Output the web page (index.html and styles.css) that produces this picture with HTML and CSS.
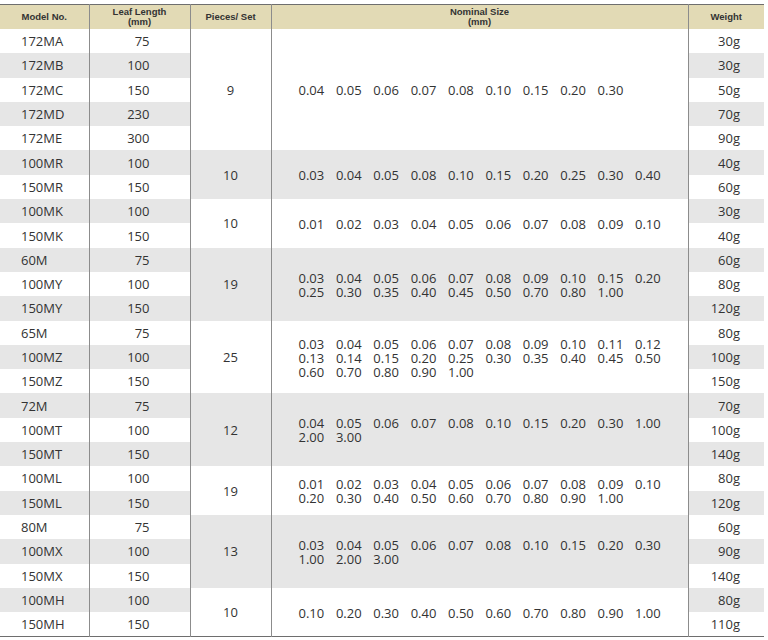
FILE: index.html
```html
<!DOCTYPE html>
<html>
<head>
<meta charset="utf-8">
<link rel="stylesheet" href="styles.css">
</head>
<body>
<table class="spec">
<colgroup>
<col class="c1"><col class="c2"><col class="c3"><col class="c4"><col class="c5">
</colgroup>
<thead>
<tr>
<th>Model No.</th>
<th class="bl">Leaf Length<br>(mm)</th>
<th class="bl">Pieces/ Set</th>
<th class="bl">Nominal Size<br>(mm)</th>
<th class="bl">Weight</th>
</tr>
</thead>
<tbody>
<tr><td class="m">172MA</td><td class="l">75</td><td class="p gw" rowspan="5">9</td><td class="n gw" rowspan="5"><div class="sz"><span>0.04</span><span>0.05</span><span>0.06</span><span>0.07</span><span>0.08</span><span>0.10</span><span>0.15</span><span>0.20</span><span>0.30</span></div></td><td class="w">30g</td></tr>
<tr class="a"><td class="m">172MB</td><td class="l">100</td><td class="w">30g</td></tr>
<tr><td class="m">172MC</td><td class="l">150</td><td class="w">50g</td></tr>
<tr class="a"><td class="m">172MD</td><td class="l">230</td><td class="w">70g</td></tr>
<tr><td class="m">172ME</td><td class="l">300</td><td class="w">90g</td></tr>

<tr class="a"><td class="m">100MR</td><td class="l">100</td><td class="p gg" rowspan="2">10</td><td class="n gg" rowspan="2"><div class="sz"><span>0.03</span><span>0.04</span><span>0.05</span><span>0.08</span><span>0.10</span><span>0.15</span><span>0.20</span><span>0.25</span><span>0.30</span><span>0.40</span></div></td><td class="w">40g</td></tr>
<tr><td class="m">150MR</td><td class="l">150</td><td class="w">60g</td></tr>

<tr class="a"><td class="m">100MK</td><td class="l">100</td><td class="p gw" rowspan="2">10</td><td class="n gw" rowspan="2"><div class="sz"><span>0.01</span><span>0.02</span><span>0.03</span><span>0.04</span><span>0.05</span><span>0.06</span><span>0.07</span><span>0.08</span><span>0.09</span><span>0.10</span></div></td><td class="w">30g</td></tr>
<tr><td class="m">150MK</td><td class="l">150</td><td class="w">40g</td></tr>

<tr class="a"><td class="m">60M</td><td class="l">75</td><td class="p gg" rowspan="3">19</td><td class="n gg" rowspan="3"><div class="sz"><span>0.03</span><span>0.04</span><span>0.05</span><span>0.06</span><span>0.07</span><span>0.08</span><span>0.09</span><span>0.10</span><span>0.15</span><span>0.20</span><span>0.25</span><span>0.30</span><span>0.35</span><span>0.40</span><span>0.45</span><span>0.50</span><span>0.70</span><span>0.80</span><span>1.00</span></div></td><td class="w">60g</td></tr>
<tr><td class="m">100MY</td><td class="l">100</td><td class="w">80g</td></tr>
<tr class="a"><td class="m">150MY</td><td class="l">150</td><td class="w">120g</td></tr>

<tr><td class="m">65M</td><td class="l">75</td><td class="p gw" rowspan="3">25</td><td class="n gw" rowspan="3"><div class="sz"><span>0.03</span><span>0.04</span><span>0.05</span><span>0.06</span><span>0.07</span><span>0.08</span><span>0.09</span><span>0.10</span><span>0.11</span><span>0.12</span><span>0.13</span><span>0.14</span><span>0.15</span><span>0.20</span><span>0.25</span><span>0.30</span><span>0.35</span><span>0.40</span><span>0.45</span><span>0.50</span><span>0.60</span><span>0.70</span><span>0.80</span><span>0.90</span><span>1.00</span></div></td><td class="w">80g</td></tr>
<tr class="a"><td class="m">100MZ</td><td class="l">100</td><td class="w">100g</td></tr>
<tr><td class="m">150MZ</td><td class="l">150</td><td class="w">150g</td></tr>

<tr class="a"><td class="m">72M</td><td class="l">75</td><td class="p gg" rowspan="3">12</td><td class="n gg" rowspan="3"><div class="sz"><span>0.04</span><span>0.05</span><span>0.06</span><span>0.07</span><span>0.08</span><span>0.10</span><span>0.15</span><span>0.20</span><span>0.30</span><span>1.00</span><span>2.00</span><span>3.00</span></div></td><td class="w">70g</td></tr>
<tr><td class="m">100MT</td><td class="l">100</td><td class="w">100g</td></tr>
<tr class="a"><td class="m">150MT</td><td class="l">150</td><td class="w">140g</td></tr>

<tr><td class="m">100ML</td><td class="l">100</td><td class="p gw" rowspan="2">19</td><td class="n gw" rowspan="2"><div class="sz"><span>0.01</span><span>0.02</span><span>0.03</span><span>0.04</span><span>0.05</span><span>0.06</span><span>0.07</span><span>0.08</span><span>0.09</span><span>0.10</span><span>0.20</span><span>0.30</span><span>0.40</span><span>0.50</span><span>0.60</span><span>0.70</span><span>0.80</span><span>0.90</span><span>1.00</span></div></td><td class="w">80g</td></tr>
<tr class="a"><td class="m">150ML</td><td class="l">150</td><td class="w">120g</td></tr>

<tr><td class="m">80M</td><td class="l">75</td><td class="p gg" rowspan="3">13</td><td class="n gg" rowspan="3"><div class="sz"><span>0.03</span><span>0.04</span><span>0.05</span><span>0.06</span><span>0.07</span><span>0.08</span><span>0.10</span><span>0.15</span><span>0.20</span><span>0.30</span><span>1.00</span><span>2.00</span><span>3.00</span></div></td><td class="w">60g</td></tr>
<tr class="a"><td class="m">100MX</td><td class="l">100</td><td class="w">90g</td></tr>
<tr><td class="m">150MX</td><td class="l">150</td><td class="w">140g</td></tr>

<tr class="a"><td class="m">100MH</td><td class="l">100</td><td class="p gw" rowspan="2">10</td><td class="n gw" rowspan="2"><div class="sz"><span>0.10</span><span>0.20</span><span>0.30</span><span>0.40</span><span>0.50</span><span>0.60</span><span>0.70</span><span>0.80</span><span>0.90</span><span>1.00</span></div></td><td class="w">80g</td></tr>
<tr><td class="m">150MH</td><td class="l">150</td><td class="w">110g</td></tr>
</tbody>
</table>
</body>
</html>
```
FILE: styles.css
```css
html, body {
  margin: 0;
  padding: 0;
  background: #ffffff;
}
body {
  padding-top: 4px;
}
.spec {
  border-collapse: collapse;
  table-layout: fixed;
  width: 764px;
  border-top: 1px solid #6e6e6e;
  border-bottom: 1px solid #6e6e6e;
  font-family: "Open Sans", "Liberation Sans", sans-serif;
  color: #333333;
}
.c1 { width: 89px; }
.c2 { width: 101px; }
.c3 { width: 81px; }
.c4 { width: 417px; }
.c5 { width: 76px; }

.spec th {
  background: #e2dab5;
  height: 24px;
  padding: 0;
  font-family: "Liberation Sans", Arial, sans-serif;
  font-weight: bold;
  font-size: 9.5px;
  line-height: 10px;
  color: #333333;
  text-align: center;
  vertical-align: middle;
}
.spec th.bl {
  border-left: 1px solid #8c8c8c;
}
.spec td {
  height: 24.3px;
  padding: 0;
  font-size: 13px;
  line-height: 14px;
  vertical-align: middle;
  background: #ffffff;
}
.spec tr.a td {
  background: #e6e6e6;
}
.spec td.m {
  padding-left: 21px;
  text-align: left;
}
.spec td.l {
  border-left: 1px solid #8c8c8c;
  text-align: right;
  padding-right: 40px;
}
.spec td.p {
  border-left: 1px solid #8c8c8c;
  text-align: center;
}
.spec td.n {
  border-left: 1px solid #8c8c8c;
}
.spec td.w {
  border-left: 1px solid #8c8c8c;
  text-align: right;
  padding-right: 24px;
}
.spec tr td.gw {
  background: #ffffff;
}
.spec tr td.gg {
  background: #e6e6e6;
}
.sz {
  display: grid;
  grid-template-columns: repeat(10, 25.5px);
  column-gap: 11.9px;
  justify-content: center;
  padding-top: 1px;
}
```
